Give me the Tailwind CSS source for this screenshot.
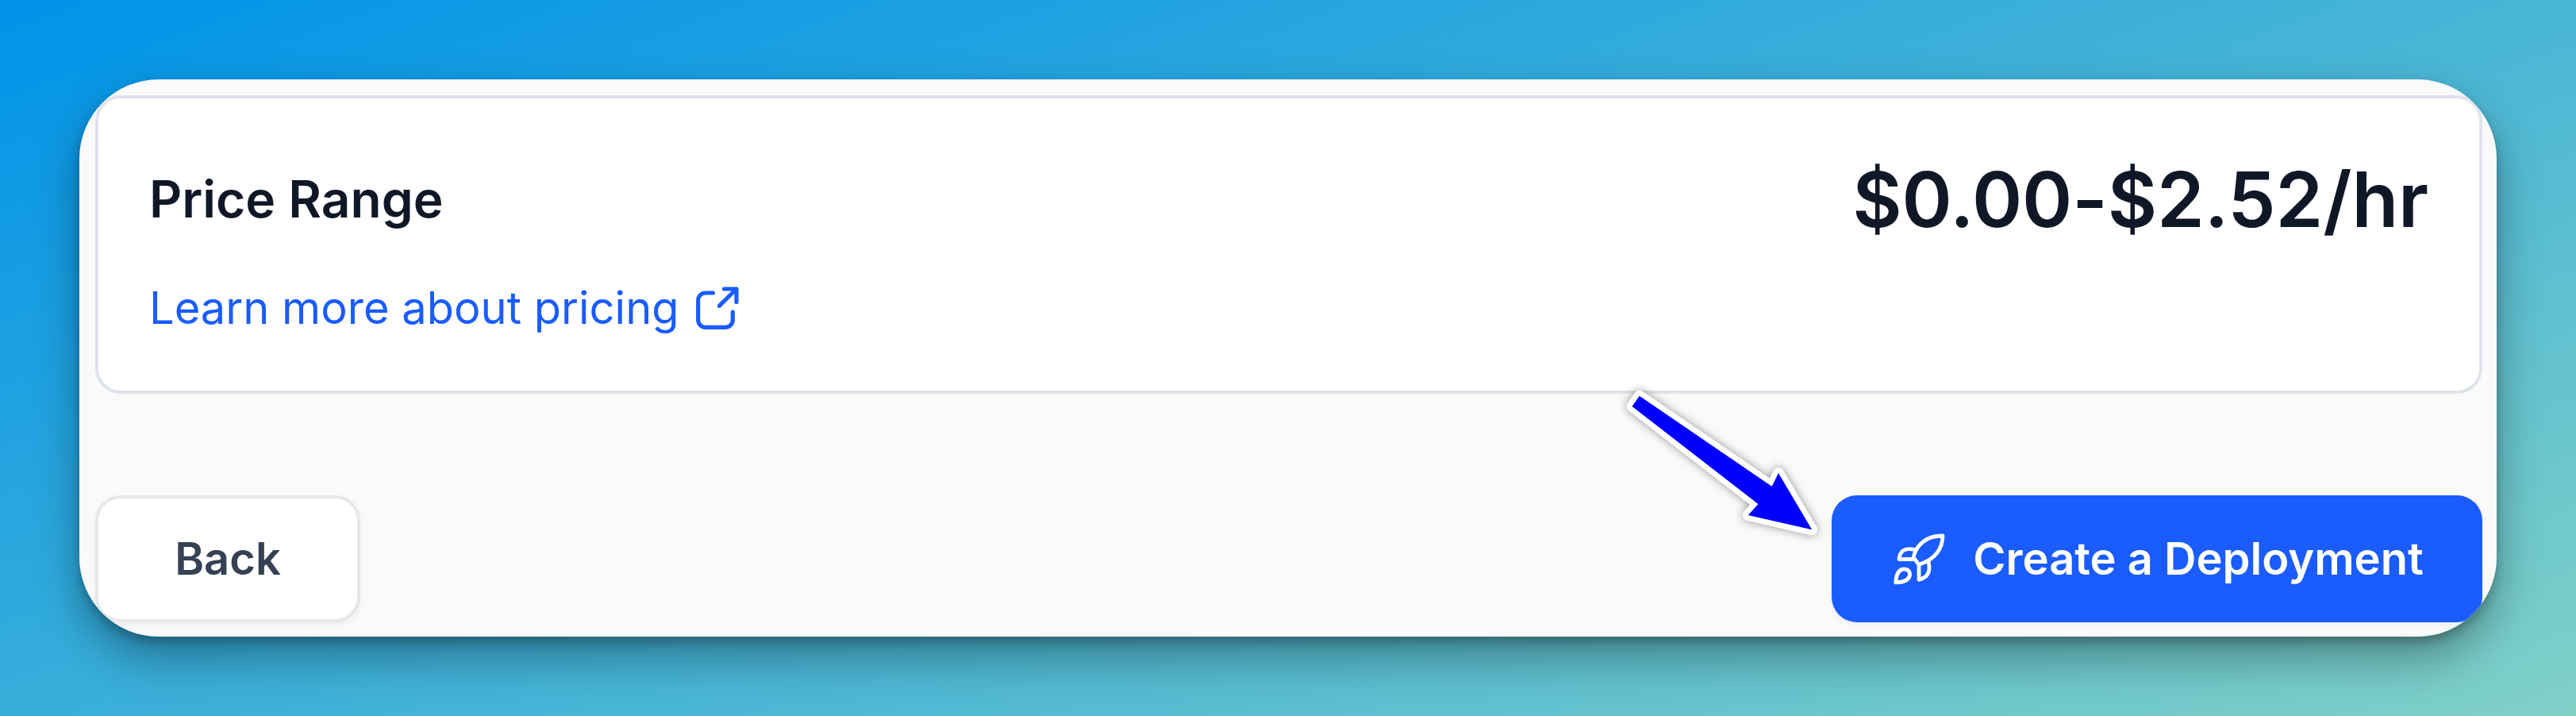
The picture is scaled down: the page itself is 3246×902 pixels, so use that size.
<!DOCTYPE html>
<html lang="en">
<head>
  <meta charset="UTF-8">
  <title>Create Deployment</title>
  <script src="https://cdn.jsdelivr.net/npm/@tailwindcss/browser@4"></script>
</head>
<body class="w-[3246px] h-[902px] p-[100px] overflow-hidden bg-[linear-gradient(160deg,#0093E9_0%,#80D0C7_100%)] font-['Inter',sans-serif]">

  <!-- Panel -->
  <div class="relative h-[702px] rounded-[100px] shadow-[0_26px_56px_rgba(0,0,0,0.34),0_7px_12px_rgba(0,0,0,0.22)]">
    <div class="h-full rounded-[100px] overflow-hidden bg-[#fafafa] pt-5 pl-5 pr-[18px]">

      <!-- Price Card -->
      <div class="h-[376px] bg-white border-4 border-[#dfe3ec] rounded-[32px] px-16 pt-[63px]">
        <div class="flex items-center justify-between h-32">
          <h2 class="text-[64px] leading-none font-semibold text-[#101828]">Price Range</h2>
          <p class="text-[96px] leading-none font-semibold tracking-[-0.15px] text-[#101828]">$0.00-$2.52/hr</p>
        </div>
        <a href="#" class="mt-[33px] flex items-center gap-4 h-20 text-[56px] leading-none text-[#1a5cff]">
          <span>Learn more about pricing</span>
          <svg class="size-16" viewBox="6 6 64 64" fill="none" stroke="currentColor" stroke-width="5.2" stroke-linecap="round" stroke-linejoin="round">
            <path d="M32.500 19H23a9.300 9.300 0 0 0-9.300 9.300V53a9.300 9.300 0 0 0 9.300 9.300h25a9.300 9.300 0 0 0 9.300-9.300V43" />
            <path d="M40.300 35.300 62 14M46.500 14H62v16.500" />
          </svg>
        </a>
      </div>

      <!-- Actions -->
      <div class="mt-32 flex justify-between">
        <button class="w-[334px] h-40 bg-white border-4 border-[#e5e7eb] rounded-[32px] shadow-[0_4px_8px_rgba(0,0,0,0.05)] text-[56px] leading-none font-semibold text-[#364153]">Back</button>
        <button class="w-[820px] h-40 flex items-center justify-center gap-8 bg-[#1a5cff] rounded-[32px] shadow-[0_4px_8px_rgba(0,0,0,0.05)] text-[56px] leading-none font-semibold text-white">
          <svg class="size-[72px]" viewBox="6.5 7 72 72" fill="none" stroke="currentColor" stroke-width="4.8" stroke-linecap="round" stroke-linejoin="round">
            <path d="M72.500 14C54 13.500 40 24 36 39.500q-.5 2 .8 3.500l4.700 6q1.300 1.500 3 .5C60 44 72 33 72.500 14Z" />
            <path d="M37.500 31.500C26 29 18.500 31.500 17.500 43.500h18.500" />
            <path d="M42.500 50.500V69.300C54 66.500 57.500 59.500 54.500 46.500" />
            <path d="M13.300 72.800C14 62 17.500 56 23.800 56c5 0 7.700 3 7.200 7.500C30 69.500 23 72.500 13.300 72.800Z" />
          </svg>
          <span>Create a Deployment</span>
        </button>
      </div>
    </div>

    <!-- Arrow pointing at the deploy button -->
    <svg class="absolute left-[1920px] top-[370px] w-[300px] h-[230px] overflow-visible drop-shadow-[0_0_6px_rgba(0,0,0,0.4)]" viewBox="2020 470 300 230">
      <path d="M2065.800 498.700 2056.600 512 2215.500 635 2202.800 649 2283.200 667.300 2241 596 2232.700 612.700Z" fill="#fff" stroke="#fff" stroke-width="14" stroke-linejoin="round" />
      <path d="M2065.800 498.700 2056.600 512 2215.500 635 2202.800 649 2283.200 667.300 2241 596 2232.700 612.700Z" fill="#0000ff" />
    </svg>
  </div>

</body>
</html>
